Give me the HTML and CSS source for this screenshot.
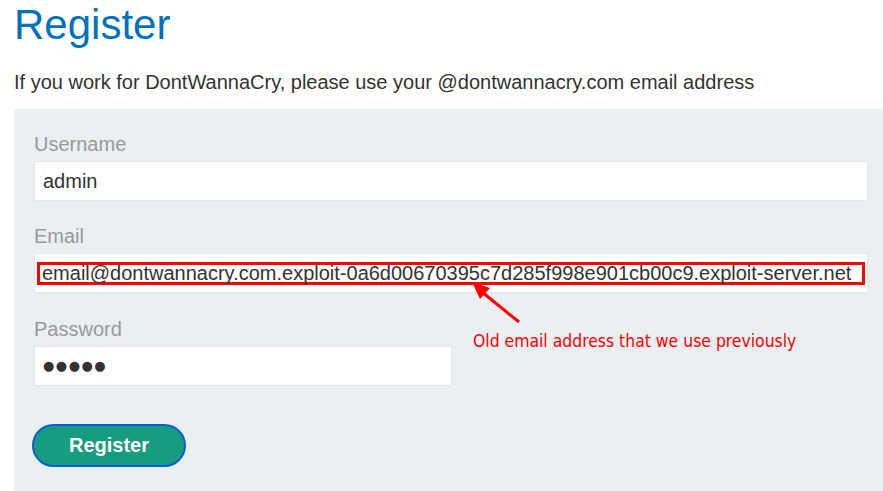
FILE: index.html
```html
<!DOCTYPE html>
<html lang="en">
<head>
<meta charset="utf-8">
<title>Register</title>
<link rel="stylesheet" href="styles.css">
</head>
<body>
<main class="page">
  <h1 class="title">Register</h1>
  <p class="intro">If you work for DontWannaCry, please use your @dontwannacry.com email address</p>
  <form class="panel">
    <label class="label">Username</label>
    <div class="field">admin</div>
    <label class="label">Email</label>
    <div class="field field-email"><span class="highlight">email@dontwannacry.com.exploit-0a6d00670395c7d285f998e901cb00c9.exploit-server.net</span></div>
    <label class="label label-pw">Password</label>
    <div class="field field-short dots">●●●●●</div>
    <button type="button" class="btn">Register</button>
    <svg class="arrow" width="60" height="50" viewBox="0 0 60 50" aria-hidden="true">
      <line x1="53" y1="47" x2="16" y2="17" stroke="#ff0000" stroke-width="3"/>
      <polygon points="6,7 24,13 14,24" fill="#ff0000"/>
    </svg>
    <span class="note">Old email address that we use previously</span>
  </form>
</main>
</body>
</html>
```
FILE: styles.css
```css
* { box-sizing: border-box; }
html, body { margin: 0; padding: 0; background: #ffffff; }
body {
  font-family: "Liberation Sans", Arial, sans-serif;
  color: #333332;
  overflow: hidden;
}
.page {
  padding-left: 14px;
}
.title {
  margin: 4px 0 0 0;
  font-size: 42px;
  line-height: 42px;
  font-weight: normal;
  color: #0071bc;
}
.intro {
  margin: 24px 0 0 0;
  font-size: 20px;
  line-height: 24px;
  height: 39px;
}
.panel {
  position: relative;
  display: flex;
  flex-direction: column;
  align-items: flex-start;
  background: #eaeff2;
  padding: 23px 15px 40px 20px;
  min-height: 400px;
}
.label {
  display: block;
  font-size: 20px;
  line-height: 24px;
  color: #999999;
  margin-bottom: 5px;
}
.label-pw {
  margin-top: 1px;
}
.field {
  align-self: stretch;
  height: 40px;
  background: #ffffff;
  border: 1px solid #e4e6e7;
  font-size: 20px;
  line-height: 38px;
  padding: 0 8px;
  margin-bottom: 23px;
  white-space: nowrap;
  color: #333332;
}
.field-email {
  padding: 0 2px;
  display: flex;
  align-items: center;
}
.highlight {
  display: block;
  flex: 1;
  border: 3px solid #ff0000;
  line-height: 17px;
  padding: 0 0 0 2px;
}
.field-short {
  align-self: flex-start;
  width: 418px;
}
.dots {
  font-family: "DejaVu Sans", sans-serif;
  font-size: 13px;
  letter-spacing: 1.5px;
}
.btn {
  margin-top: 15px;
  margin-left: -2px;
  width: 154px;
  height: 43px;
  border-radius: 22px;
  border: 2px solid #0b5ed7;
  background: #179c80;
  color: #ffffff;
  font-family: "Liberation Sans", Arial, sans-serif;
  font-weight: bold;
  font-size: 20px;
  padding: 0;
}
.arrow {
  position: absolute;
  left: 452px;
  top: 166px;
}
.note {
  position: absolute;
  left: 459px;
  top: 222px;
  font-family: "DejaVu Sans Condensed", "DejaVu Sans", sans-serif;
  font-size: 17.4px;
  line-height: 20px;
  color: #ff0000;
}
```
